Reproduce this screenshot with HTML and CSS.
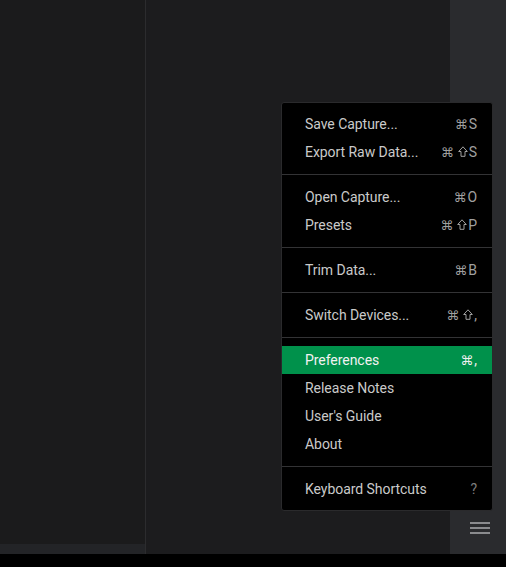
FILE: index.html
```html
<!DOCTYPE html>
<html lang="en">
<head>
<meta charset="utf-8">
<title>Menu</title>
<link rel="stylesheet" href="styles.css">
</head>
<body>
<div class="app">
  <div class="main">
    <div class="left-panel">
      <div class="left-content"></div>
      <div class="left-footer"></div>
    </div>
    <div class="divider"></div>
    <div class="center-panel"></div>
    <div class="sidebar">
      <div class="sidebar-spacer"></div>
      <button class="menu-button" aria-label="Menu">
        <svg width="20" height="14" viewBox="0 0 20 14">
          <rect x="0" y="1" width="20" height="2" fill="#8a8b8e"/>
          <rect x="0" y="6" width="20" height="2" fill="#8a8b8e"/>
          <rect x="0" y="11" width="20" height="2" fill="#8a8b8e"/>
        </svg>
      </button>
    </div>
  </div>
  <div class="bottom-bar"></div>

  <div class="menu">
    <div class="group">
      <div class="item"><span>Save Capture...</span><span class="key"><i class="sym">⌘</i>S</span></div>
      <div class="item"><span>Export Raw Data...</span><span class="key"><i class="sym">⌘</i><svg class="shift" width="10" height="11" viewBox="0 0 10 11"><path d="M5 0.8 L9.3 5.5 L7 5.5 L7 10.3 L3 10.3 L3 5.5 L0.7 5.5 Z" fill="none" stroke="currentColor" stroke-width="1"/></svg>S</span></div>
    </div>
    <div class="group">
      <div class="item"><span>Open Capture...</span><span class="key"><i class="sym">⌘</i>O</span></div>
      <div class="item"><span>Presets</span><span class="key"><i class="sym">⌘</i><svg class="shift" width="10" height="11" viewBox="0 0 10 11"><path d="M5 0.8 L9.3 5.5 L7 5.5 L7 10.3 L3 10.3 L3 5.5 L0.7 5.5 Z" fill="none" stroke="currentColor" stroke-width="1"/></svg>P</span></div>
    </div>
    <div class="group">
      <div class="item"><span>Trim Data...</span><span class="key"><i class="sym">⌘</i>B</span></div>
    </div>
    <div class="group">
      <div class="item"><span>Switch Devices...</span><span class="key"><i class="sym">⌘</i><svg class="shift" width="10" height="11" viewBox="0 0 10 11"><path d="M5 0.8 L9.3 5.5 L7 5.5 L7 10.3 L3 10.3 L3 5.5 L0.7 5.5 Z" fill="none" stroke="currentColor" stroke-width="1"/></svg>,</span></div>
    </div>
    <div class="group">
      <div class="item active"><span>Preferences</span><span class="key"><i class="sym">⌘</i>,</span></div>
      <div class="item"><span>Release Notes</span></div>
      <div class="item"><span>User's Guide</span></div>
      <div class="item"><span>About</span></div>
    </div>
    <div class="group">
      <div class="item"><span>Keyboard Shortcuts</span><span class="key dim">?</span></div>
    </div>
  </div>
</div>
</body>
</html>
```

FILE: styles.css
```css
* { box-sizing: border-box; }
html, body {
  margin: 0;
  padding: 0;
  background: #000;
  font-family: Roboto, "Liberation Sans", sans-serif;
}
.app {
  position: relative;
  width: 506px;
  height: 567px;
  display: flex;
  flex-direction: column;
  overflow: hidden;
}
.main {
  display: flex;
  height: 554px;
}
.left-panel {
  width: 145px;
  display: flex;
  flex-direction: column;
  background: #1b1b1c;
}
.left-content { flex: 1; }
.left-footer {
  height: 10px;
  background: #232427;
}
.divider {
  width: 1px;
  background: #2c2c2e;
}
.center-panel {
  flex: 1;
  background: #1c1c1e;
}
.sidebar {
  width: 56px;
  background: #2a2b2e;
  display: flex;
  flex-direction: column;
  align-items: center;
}
.sidebar-spacer { flex: 1; }
.menu-button {
  border: 0;
  background: transparent;
  padding: 0;
  margin: 0 0 19px 4px;
  width: 20px;
  height: 14px;
  display: block;
}
.menu-button svg { display: block; }
.bottom-bar {
  flex: 1;
  background: #000;
}
.menu {
  position: absolute;
  left: 281px;
  top: 102px;
  width: 212px;
  background: #000;
  border: 1px solid #2a2a2c;
  border-radius: 3px;
  color: #cacaca;
  font-size: 14px;
}
.group {
  padding: 7px 0 8px;
  border-bottom: 1px solid #333335;
}
.group + .group { padding-top: 8px; }
.group:last-child {
  border-bottom: 0;
  padding-bottom: 7px;
}
.item {
  height: 28px;
  display: flex;
  align-items: center;
  justify-content: space-between;
  padding: 0 15px 0 23px;
  letter-spacing: -0.05px;
}
.item.active {
  background: #00914b;
  color: #f2f2f2;
}
.key {
  color: #a0a0a0;
  font-size: 14px;
  display: flex;
  align-items: center;
}
.sym {
  font-style: normal;
  font-family: "DejaVu Sans", sans-serif;
  font-size: 13px;
  margin-right: 1px;
}
.shift {
  display: block;
  margin: 0 1px 0 3px;
  position: relative;
  top: -1px;
}
.item.active .key { color: #f0f0f0; }
.key.dim { color: #7c7c7c; }
```
